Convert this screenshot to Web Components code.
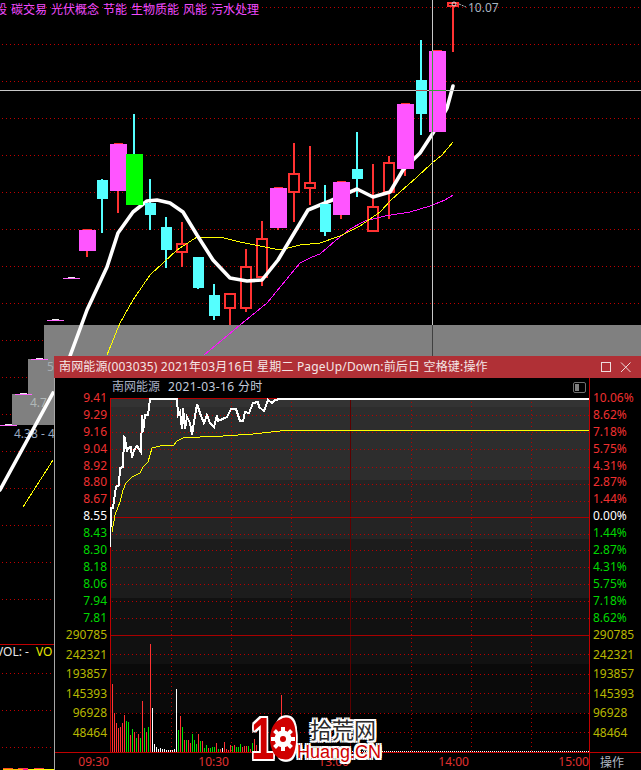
<!DOCTYPE html>
<html lang="zh-CN">
<head>
<meta charset="utf-8">
<title>南网能源</title>
<style>
html,body{margin:0;padding:0;background:#000;}
body{font-family:"Noto Sans","Noto Sans CJK SC",sans-serif;width:641px;height:770px;overflow:hidden;}
</style>
</head>
<body>
<stock-screen>
  <kline-canvas>
    <concept-tags names="股,碳交易,光伏概念,节能,生物质能,风能,污水处理"></concept-tags>
  </kline-canvas>
  <popup-window caption="南网能源(003035) 2021年03月16日 星期二 PageUp/Down:前后日 空格键:操作"></popup-window>
  <site-logo></site-logo>
</stock-screen>
<script>
const FONT='"Noto Sans","Noto Sans CJK SC",sans-serif';
const CJK='"Noto Sans CJK SC","Noto Sans",sans-serif';
const pts=a=>a.map(p=>p.join(',')).join(' ');
const rect=(x,y,w,h,f,extra='')=>`<rect x="${x}" y="${y}" width="${w}" height="${h}" fill="${f}" ${extra}/>`;
const poly=(a,c,w,extra='')=>`<polyline points="${pts(a)}" fill="none" stroke="${c}" stroke-width="${w}" stroke-linejoin="round" stroke-linecap="round" ${extra}/>`;

class StockScreen extends HTMLElement{
  constructor(){super();this.attachShadow({mode:'open'}).innerHTML=`<style>
    :host{display:block;position:relative;width:641px;height:770px;overflow:hidden;background:#000;font-family:${FONT};}
  </style><slot></slot>`;}
}
customElements.define('stock-screen',StockScreen);

class ConceptTags extends HTMLElement{
  constructor(){super();this.attachShadow({mode:'open'});}
  connectedCallback(){
    const names=this.getAttribute('names').split(',');
    this.shadowRoot.innerHTML=`<style>
      :host{display:flex;gap:4px;margin-left:-5px;height:18px;align-items:center;font:12px/18px ${CJK};color:#f04cff;white-space:nowrap;position:relative;}
    </style>`+names.map(n=>`<span>${n}</span>`).join('');
  }
}
customElements.define('concept-tags',ConceptTags);

class KlineCanvas extends HTMLElement{
  constructor(){super();this.attachShadow({mode:'open'});}
  connectedCallback(){
    const M='#ff55ff',C='#55ffff',G='#00ff00',R='#ff3232';
    let back='',s='';
    for(let y=7;y<770;y+=37){
      if(y===636) continue;
      back+=`<line x1="2" x2="641" y1="${y+.5}" y2="${y+.5}" stroke="#c00000" stroke-dasharray="1 3"/>`;
    }
    back+=rect(0,644,54,1,'#c00000');
    back+=rect(44,325,597,40,'#808080')+rect(28,359,26,35,'#808080')+rect(12,394,42,31,'#808080');
    for(const [x,y] of [[63,277],[47,319],[31,358],[15,393],[0,424]]){
      back+=rect(x,y+1,17,1,'#ff66ff')+rect(x+5,y,7,1,'#eeeeee');
    }
    const hollow=[
      [176,188,243,253,182,222,267],[224,236,293,309,230,309,325],[240,252,266,309,246,249,312],
      [256,268,238,278,262,221,286],[288,300,173,193,294,143,222],[304,316,182,189,310,146,205],
      [367,379,206,232,373,164,206],[383,395,162,193,389,156,219],[447,459,2,7,453,7,52]
    ];
    const filled=[
      [79,96,230,251,M,87,229,257,R],[97,108,180,199,C,102,179,233,C],[110,127,144,191,M,118,143,213,R],
      [126,143,154,205,G,134,114,154,C],[145,156,203,215,C,150,179,230,C],[161,172,227,250,C,166,217,268,C],
      [193,204,257,288,C,198,257,289,C],[209,220,295,316,C,214,284,320,C],[270,287,188,228,M,278,187,230,R],
      [320,331,204,232,C,325,185,236,C],[333,350,182,215,M,341,181,219,R],[352,363,169,179,C,357,132,197,C],
      [397,414,104,169,M,405,103,176,R],[416,427,80,114,C,421,40,135,C],[429,446,51,132,M,437,50,132,M]
    ];
    s+='<g shape-rendering="crispEdges">';
    for(const c of hollow){ s+=rect(c[4]-1,c[5],2,c[6]-c[5],R); }
    for(const c of hollow){
      s+=`<rect x="${c[0]+1}" y="${c[2]+1}" width="${c[1]-c[0]-2}" height="${c[3]-c[2]-2}" fill="#000" stroke="${R}" stroke-width="2"/>`;
    }
    for(const c of filled){ s+=rect(c[5]-1,c[6],2,c[7]-c[6],c[8]); }
    s+='</g>';
    const crisp='shape-rendering="crispEdges"';
    s+=poly([[204,355],[240,325],[267,303],[300,263],[312,257],[320,254],[335,241],[350,229],[365,221],[385,216],[410,212],[430,206],[445,200],[453,195]],'#ff10ff',1,crisp);
    s+=poly([[23,507],[53,460]],'#ffff00',1,crisp);
    s+=poly([[107,355],[120,323],[133,300],[150,275],[177,250],[197,237],[220,237],[240,242],[280,250],[300,245],[320,243],[340,236],[360,226],[380,212],[391,200],[417,177],[432,163],[442,155],[453,142]],'#ffff00',1,crisp);
    s+=poly([[0,490],[53,393]],'#fff',3.6);
    s+=poly([[70,356],[87,310],[107,267],[118,233],[133,212],[147,201],[157,200],[170,203],[183,212],[197,235],[213,260],[230,278],[247,281],[262,280],[278,260],[293,235],[308,210],[320,205],[330,201],[350,192],[357,189],[373,197],[390,192],[403,170],[420,153],[433,133],[447,108],[453,86]],'#fff',3.6);
    s+='<g shape-rendering="crispEdges">';
    for(const c of filled){ s+=rect(c[0],c[2],c[1]-c[0],c[3]-c[2],c[4]); }
    for(const c of filled){ if(c[4]===M) s+=rect(c[0]+4,c[2]-1,c[1]-c[0]-8,1,R); }
    s+=rect(0,90,641,1,'#c8c8c8')+rect(432,0,1,325,'#c8c8c8')+rect(432,325,1,40,'#404040');
    s+=rect(432,51,1,81,'#3c9a3c')+rect(429,90,17,1,'#3c9a3c')+rect(416,90,11,1,'#a85050');
    s+=rect(3,768,10,1,'#ff5020')+rect(18,768,10,1,'#ff4040')+rect(34,768,10,1,'#ff4040')+rect(3,769,20,1,'#ffc000')+rect(23,769,5,1,'#ff00a0')+rect(28,769,26,1,'#ffff00');
    s+='</g><line x1="459" y1="4" x2="466" y2="7" stroke="#b0b8c0" stroke-dasharray="2 1"/><circle cx="454" cy="4" r="2" fill="none" stroke="#d8d8d8" stroke-width="1"/>';
    this.shadowRoot.innerHTML=`<style>
      :host{display:block;position:relative;width:641px;height:770px;}
      svg{position:absolute;left:0;top:0;}
      .lbl{position:absolute;font:12px/14px ${FONT};white-space:pre;}
    </style>
    <svg width="641" height="770" viewBox="0 0 641 770" shape-rendering="crispEdges">${back}</svg>
    <span class="lbl" style="left:47px;top:360px;color:#a8acb0">5</span>
    <span class="lbl" style="left:30px;top:396px;color:#b0b8b8">4.7</span>
    <span class="lbl" style="left:14px;top:427px;color:#98a8c0">4.38 - 4</span>
    <span class="lbl" style="left:-4px;top:645px;color:#e8e8e8">VOL: -</span>
    <span class="lbl" style="left:36px;top:645px;color:#e8e800">VO</span>
    <span class="lbl" style="left:468px;top:1px;color:#a8b4c0">10.07</span>
    <svg width="641" height="770" viewBox="0 0 641 770">${s}</svg>
    <slot></slot>`;
  }
}
customElements.define('kline-canvas',KlineCanvas);

class PriceAxis extends HTMLElement{
  constructor(){super();this.attachShadow({mode:'open'});}
  connectedCallback(){
    const col={r:'#f03030',w:'#ffffff',g:'#00d800',y:'#b8b800'};
    const price=this.getAttribute('price').split(',');
    const vol=this.getAttribute('vol').split(',');
    const row=t=>{const [v,c]=t.split(':');return `<span style="color:${col[c]}">${v}</span>`;};
    this.shadowRoot.innerHTML=`<style>
      :host{display:flex;flex-direction:column;flex:none;box-sizing:border-box;padding-top:12px;font:12px/17px ${FONT};}
      :host([side=left]){width:55px;padding-right:3px;text-align:right;}
      :host([side=right]){width:51px;padding-left:3px;text-align:left;}
      .p,.v{display:flex;flex-direction:column;}
      .p span{height:16.9px;line-height:16.9px;}
      .v{margin-top:-1px;}
      .v span{height:19.5px;line-height:19.5px;}
    </style><div class="p">${price.map(row).join('')}</div><div class="v">${vol.map(row).join('')}</div>`;
  }
}
customElements.define('price-axis',PriceAxis);

class IntradayChart extends HTMLElement{
  constructor(){super();this.attachShadow({mode:'open'});}
  connectedCallback(){
    let s='<g shape-rendering="crispEdges">';
    for(const [a,b,c] of [[398,407,'#333333'],[407,480,'#2d2d2d'],[480,539,'#242424'],[539,598,'#1c1c1c'],[598,664,'#111111'],[664,713,'#0a0a0a']]){
      s+=rect(110,a,479,b-a,c);
    }
    const D='#b80000';
    for(const y of [415,432,449,467,484,501,534,550,567,584,601,618,654,674,693,713,732]){
      s+=`<line x1="112" x2="589" y1="${y+.5}" y2="${y+.5}" stroke="${D}" stroke-dasharray="1 3"/>`;
    }
    for(const x of [171,231,291,411,471,531]){
      s+=`<line x1="${x+.5}" x2="${x+.5}" y1="398" y2="752" stroke="${D}" stroke-dasharray="1 3"/>`;
    }
    s+=rect(350,398,1,354,'#5c0000')+rect(110,517,479,1,'#a80000')+rect(110,635,479,1,'#a80000');
    s+=rect(110,398,479,1,'#b80000')+rect(110,398,1,354,'#c00000');
    const raw='337:342:r 343:428:r 349:460:r 355:473:r 361:470:r 367:458:r 373:435:r 379:452:g 385:456:g 391:495:r 397:477:g 403:487:r 409:505:g 415:492:r 421:503:g 427:393:r 433:473:g 439:487:r 445:470:g 451:222:r 457:414:w 463:522:w 469:532:w 475:538:w 481:533:w 487:537:w 493:537:w 499:540:w 505:540:w 511:540:w 517:540:w 523:538:w 529:357:w 535:480:g 541:437:r 547:470:g 553:510:r 559:510:g 565:510:r 571:520:r 577:492:g 583:510:g 589:522:g 595:492:r 601:514:g 607:514:r 613:533:g 619:525:g 625:533:r 631:533:g 637:530:g 643:530:g 649:519:r 655:537:g 661:537:r 667:533:w 673:517:r 679:537:r 685:540:r 691:524:r 697:528:g 703:525:r 709:530:g 715:530:g 721:522:g 727:530:r 733:528:r 739:528:r 745:528:g 751:537:r 757:520:g 763:507:r 769:525:r 842:375:r';
    const col={r:'#ff3232',g:'#00e000',w:'#ffffff'};
    for(const t of raw.split(' ')){
      const [x,y,c]=t.split(':');
      const top=Math.round(570+y/3);
      s+=rect(Math.round(x/3),top,1,752-top,col[c]);
    }
    for(let x=352;x<589;x+=2){ s+=rect(x,751,1,1,'#ffffff'); }
    s+='</g>';
    s+=`<polyline shape-rendering="crispEdges" fill="none" stroke="#ffff00" stroke-width="1" points="${pts([[112,532],[115,515],[120,502],[123,490],[126,483],[132,477],[140,473],[143,467],[148,462],[152,448],[160,446],[174,445],[177,441],[183,438],[200,437],[223,436],[253,434],[280,431],[589,430]])}"/>`;
    s+=`<polyline shape-rendering="crispEdges" fill="none" stroke="#fff" stroke-width="2" points="${pts([[110,547],[111,508],[113,508],[116,487],[119,485],[120,468],[123,467],[124,437],[125,438],[127,452],[128,448],[131,447],[132,458],[134,450],[137,446],[141,452],[142,415],[143,432],[145,415],[148,415],[150,399],[177,399],[178,415],[180,412],[182,429],[183,408],[185,429],[187,417],[190,423],[192,435],[194,422],[197,404],[200,413],[204,423],[207,415],[210,423],[214,427],[217,415],[218,421],[227,417],[231,409],[236,409],[240,421],[243,421],[245,412],[249,413],[253,403],[258,402],[259,407],[264,411],[268,400],[272,403],[275,400],[280,399],[589,399]])}"/>`;
    this.shadowRoot.innerHTML=`<style>
      :host{display:block;width:479px;height:354px;overflow:hidden;}
      svg{display:block;}
    </style><svg width="479" height="354" viewBox="110 398 479 354">${s}</svg>`;
  }
}
customElements.define('intraday-chart',IntradayChart);

class TimeAxis extends HTMLElement{
  constructor(){super();this.attachShadow({mode:'open'}).innerHTML=`<style>
    :host{display:flex;box-sizing:border-box;height:18px;border-top:1px solid #c00000;font:12px/17px ${FONT};color:#e03030;}
    span{display:block;text-align:right;box-sizing:border-box;padding-right:1px;width:120px;flex:none;}
    span.first{width:55px;}
    b{display:block;flex:none;width:52px;margin-left:-1px;box-sizing:border-box;border-left:1px solid #c00000;color:#b0b8c4;font:normal 12px/17px ${CJK};padding-left:10px;}
  </style><span class="first">09:30</span><span>10:30</span><span>13:00</span><span>14:00</span><span>15:00</span><b>操作</b>`;}
}
customElements.define('time-axis',TimeAxis);

class PopupWindow extends HTMLElement{
  constructor(){super();this.attachShadow({mode:'open'});}
  connectedCallback(){
    const cap=this.getAttribute('caption');
    this.shadowRoot.innerHTML=`<style>
      :host{display:flex;flex-direction:column;position:absolute;left:54px;top:356px;width:587px;height:414px;box-sizing:border-box;background:#000;font-family:${FONT};}
      .title{display:flex;align-items:center;height:22px;flex:none;background:#b03036;color:#f4e6e6;font:12px/22px ${FONT};letter-spacing:.18px;padding-left:5px;white-space:nowrap;}
      .title span{flex:1;}
      .title svg{display:block;flex:none;}
      .body{flex:1;display:flex;flex-direction:column;border-left:1px solid #a8a8a8;min-height:0;}
      .main{display:flex;height:374px;flex:none;}
      .center{width:480px;flex:none;box-sizing:border-box;border-right:1px solid #c00000;display:flex;flex-direction:column;}
      .sub{height:20px;flex:none;display:flex;align-items:center;gap:8px;padding:0 3px 2px 2px;box-sizing:border-box;font:12px/18px ${FONT};color:#c4ccdc;}
      .sub .name{color:#a8b0c4;}
      .sub .date{letter-spacing:.38px;}
      .sub .spring{flex:1;}
    </style>
    <div class="title"><span>${cap}</span>
      <svg width="35" height="12" viewBox="0 0 35 12" style="margin-right:5px"><rect x=".5" y="1.5" width="9" height="9" fill="none" stroke="#eedcdc"/><path d="M20 1.5l9.5 9.5M29.5 1.5L20 11" fill="none" stroke="#eedcdc"/></svg>
    </div>
    <div class="body">
      <div class="main">
        <price-axis side="left"
          price="9.41:r,9.29:r,9.16:r,9.04:r,8.92:r,8.80:r,8.67:r,8.55:w,8.43:g,8.30:g,8.18:g,8.06:g,7.94:g,7.81:g"
          vol="290785:y,242321:y,193857:y,145393:y,96928:y,48464:y"></price-axis>
        <div class="center">
          <div class="sub"><span class="name">南网能源</span><span class="date">2021-03-16 分时</span><span class="spring"></span>
            <svg width="13" height="11" viewBox="0 0 13 11"><rect x=".5" y=".5" width="12" height="10" rx="1.5" fill="none" stroke="#707070"/><rect x="2" y="2" width="4" height="7" fill="#808080"/></svg>
          </div>
          <intraday-chart></intraday-chart>
        </div>
        <price-axis side="right"
          price="10.06%:r,8.62%:r,7.18%:r,5.75%:r,4.31%:r,2.87%:r,1.44%:r,0.00%:w,1.44%:g,2.87%:g,4.31%:g,5.75%:g,7.18%:g,8.62%:g"
          vol="290785:y,242321:y,193857:y,145393:y,96928:y,48464:y"></price-axis>
      </div>
      <time-axis></time-axis>
    </div>`;
  }
}
customElements.define('popup-window',PopupWindow);

class SiteLogo extends HTMLElement{
  constructor(){super();
    const out=[];
    for(const [x,y] of [[-2,0],[2,0],[0,-2],[0,2],[-2,-2],[2,-2],[-2,2],[2,2]]) out.push(`${x}px ${y}px 0 #fff`);
    const sh=out.join(',');
    let teeth='';
    for(let i=0;i<8;i++){ teeth+=`<rect x="-2" y="-12" width="4" height="5" fill="#fff" transform="rotate(${i*45})"/>`; }
    this.attachShadow({mode:'open'}).innerHTML=`<style>
      :host{display:block;position:absolute;left:250px;top:714px;width:134px;height:48px;}
      .wrap{display:flex;height:48px;}
      .ten{position:relative;width:47px;flex:none;}
      .ten b{display:block;font:bold 60px/50px "Liberation Sans",sans-serif;color:#d00000;text-shadow:${sh};transform:scaleX(.7);transform-origin:0 50%;white-space:nowrap;margin-left:1px;}
      .ten svg{position:absolute;left:13px;top:3px;}
      .col{display:flex;flex-direction:column;}
      .cn{font:22px/28px ${CJK};color:#2c2c2c;text-shadow:${sh};margin-left:13px;white-space:nowrap;height:28px;}
      .en{font:18px/18px "Liberation Sans",sans-serif;color:#d00000;text-shadow:${sh};white-space:nowrap;margin-top:1px;}
    </style>
    <div class="wrap">
      <div class="ten"><b>10</b>
        <svg width="34" height="44" viewBox="-17 -22 34 44"><ellipse cx="3" cy="0" rx="13" ry="20" fill="#d00000"/><g transform="translate(3 0)">${teeth}<circle r="8.5" fill="#fff"/><circle r="3" fill="#d00000"/></g></svg>
      </div>
      <div class="col"><span class="cn">拾荒网</span><span class="en">Huang.CN</span></div>
    </div>`;
  }
}
customElements.define('site-logo',SiteLogo);
</script>
</body>
</html>
